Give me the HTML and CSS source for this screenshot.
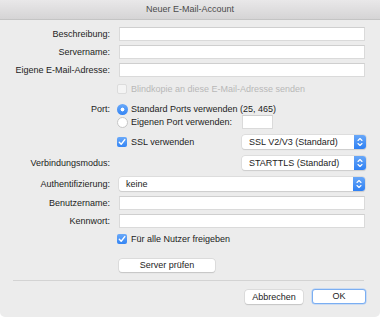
FILE: index.html
```html
<!DOCTYPE html>
<html lang="de">
<head>
<meta charset="utf-8">
<title>Neuer E-Mail-Account</title>
<link rel="stylesheet" href="styles.css">
</head>
<body>
<div class="window">
  <div class="titlebar">Neuer E-Mail-Account</div>
  <div class="form">
    <div class="row first">
      <div class="lbl">Beschreibung:</div>
      <div class="ctl"><div class="input"></div></div>
    </div>
    <div class="row g4">
      <div class="lbl">Servername:</div>
      <div class="ctl"><div class="input"></div></div>
    </div>
    <div class="row g4">
      <div class="lbl">Eigene E-Mail-Adresse:</div>
      <div class="ctl"><div class="input"></div></div>
    </div>
    <div class="row g6 small">
      <div class="lbl"></div>
      <div class="ctl opt disabled"><span class="box off"></span><span>Blindkopie an diese E-Mail-Adresse senden</span></div>
    </div>
    <div class="row g7 r13">
      <div class="lbl">Port:</div>
      <div class="ctl opt"><span class="radio on"></span><span>Standard Ports verwenden (25, 465)</span></div>
    </div>
    <div class="row g0">
      <div class="lbl"></div>
      <div class="ctl split">
        <div class="opt"><span class="radio"></span><span>Eigenen Port verwenden:</span></div>
        <div class="input port"></div>
      </div>
    </div>
    <div class="row g6">
      <div class="lbl"></div>
      <div class="ctl split">
        <div class="opt"><span class="box on"><svg viewBox="0 0 10 10"><path d="M2.3 5.2 L4.2 7.2 L7.8 2.6" fill="none" stroke="#fff" stroke-width="1.4" stroke-linecap="round" stroke-linejoin="round"/></svg></span><span>SSL verwenden</span></div>
        <div class="select"><span class="val">SSL V2/V3 (Standard)</span><span class="step"><svg viewBox="0 0 12 14"><path d="M4 5.5 L6 3.5 L8 5.5 M4 8.5 L6 10.5 L8 8.5" fill="none" stroke="#fff" stroke-width="1.1" stroke-linecap="round" stroke-linejoin="round"/></svg></span></div>
      </div>
    </div>
    <div class="row g7">
      <div class="lbl">Verbindungsmodus:</div>
      <div class="ctl split">
        <div></div>
        <div class="select"><span class="val">STARTTLS (Standard)</span><span class="step"><svg viewBox="0 0 12 14"><path d="M4 5.5 L6 3.5 L8 5.5 M4 8.5 L6 10.5 L8 8.5" fill="none" stroke="#fff" stroke-width="1.1" stroke-linecap="round" stroke-linejoin="round"/></svg></span></div>
      </div>
    </div>
    <div class="row g7">
      <div class="lbl">Authentifizierung:</div>
      <div class="ctl"><div class="select"><span class="val">keine</span><span class="step"><svg viewBox="0 0 12 14"><path d="M4 5.5 L6 3.5 L8 5.5 M4 8.5 L6 10.5 L8 8.5" fill="none" stroke="#fff" stroke-width="1.1" stroke-linecap="round" stroke-linejoin="round"/></svg></span></div></div>
    </div>
    <div class="row g5">
      <div class="lbl">Benutzername:</div>
      <div class="ctl"><div class="input"></div></div>
    </div>
    <div class="row g4">
      <div class="lbl">Kennwort:</div>
      <div class="ctl"><div class="input"></div></div>
    </div>
    <div class="row g5 small">
      <div class="lbl"></div>
      <div class="ctl opt"><span class="box on"><svg viewBox="0 0 10 10"><path d="M2.3 5.2 L4.2 7.2 L7.8 2.6" fill="none" stroke="#fff" stroke-width="1.4" stroke-linecap="round" stroke-linejoin="round"/></svg></span><span>Für alle Nutzer freigeben</span></div>
    </div>
    <div class="row g14 r13">
      <div class="lbl"></div>
      <div class="ctl"><div class="btn check">Server prüfen</div></div>
    </div>
  </div>
  <div class="sep"></div>
  <div class="footer">
    <div class="btn cancel">Abbrechen</div>
    <div class="btn ok">OK</div>
  </div>
</div>
</body>
</html>
```
FILE: styles.css
```css
* { box-sizing: border-box; }
html, body { margin: 0; padding: 0; background: #ffffff; }
body {
  font-family: "Liberation Sans", Arial, Helvetica, sans-serif;
  font-size: 9px;
  color: #232323;
  width: 380px;
  height: 317px;
  overflow: hidden;
}
.window {
  width: 380px;
  height: 317px;
  background: #ececec;
  border-radius: 0 0 5px 5px;
  overflow: hidden;
}
.titlebar {
  height: 20px;
  line-height: 19px;
  text-align: center;
  color: #4b4b4b;
  background: linear-gradient(#e9e8e9, #d5d4d5);
  border-bottom: 1px solid #c4c4c4;
}
.form { padding-top: 7px; }
.row {
  display: grid;
  grid-template-columns: 96px 246px;
  column-gap: 9px;
  margin-left: 14px;
  height: 14px;
  align-items: center;
}
.row.small { height: 12px; }
.row.r13 { height: 13px; }
.row.g0 { margin-top: 0; }
.row.g4 { margin-top: 4px; }
.row.g5 { margin-top: 5px; }
.row.g6 { margin-top: 6px; }
.row.g7 { margin-top: 7px; }
.row.g14 { margin-top: 14px; }
.lbl { text-align: right; white-space: nowrap; line-height: 14px; }
.ctl { height: 100%; display: flex; align-items: center; }
.ctl > .input, .ctl > .select { width: 100%; }
.input {
  height: 14px;
  background: #ffffff;
  border: 1px solid #dadada;
  border-top-color: #cfcfcf;
}
.input.port { width: 31px; }
.split {
  display: grid;
  grid-template-columns: 123px 124px;
  align-items: center;
}
.opt {
  display: flex;
  align-items: center;
  gap: 4px;
  white-space: nowrap;
  line-height: 12px;
}
.opt.disabled { color: #b8b8b8; }
.box {
  width: 10px;
  height: 10px;
  margin-left: -2px;
  border-radius: 2px;
  flex: none;
  display: flex;
}
.box svg { width: 10px; height: 10px; }
.box.on { background: linear-gradient(#6aa9f9, #3485f4); }
.box.off { background: #f4f4f4; border: 1px solid #dcdcdc; }
.radio {
  width: 11px;
  height: 11px;
  margin-left: -2px;
  margin-right: -1px;
  border-radius: 50%;
  flex: none;
  background: #ffffff;
  border: 1px solid #c6c6c6;
}
.radio.on {
  border: none;
  background: radial-gradient(circle, #ffffff 0 1.7px, transparent 2.2px), linear-gradient(#6aa9f9, #3485f4);
}
.select {
  height: 14px;
  background: #ffffff;
  border-radius: 3px;
  box-shadow: 0 0 0 0.5px #d2d2d2, 0 0.5px 1px rgba(0,0,0,0.15);
  display: flex;
  align-items: center;
  justify-content: space-between;
}
.val { padding-left: 7px; line-height: 14px; white-space: nowrap; }
.step {
  width: 12px;
  height: 14px;
  border-radius: 0 3px 3px 0;
  background: linear-gradient(#68a7f8, #2f80f3);
  display: flex;
}
.step svg { width: 12px; height: 14px; }
.btn {
  height: 13px;
  line-height: 13px;
  text-align: center;
  background: #ffffff;
  border-radius: 3px;
  box-shadow: 0 0 0 0.5px #cfcfcf, 0 0.5px 1px rgba(0,0,0,0.2);
  white-space: nowrap;
}
.btn.check { width: 96px; }
.sep {
  margin: 8px 16px 0 13px;
  height: 1px;
  background: #d3d3d3;
}
.footer {
  display: flex;
  justify-content: flex-end;
  gap: 9px;
  margin-top: 9px;
  padding-right: 14px;
}
.btn.cancel { width: 58px; height: 14px; line-height: 14px; }
.btn.ok {
  width: 54px;
  height: 15px;
  line-height: 13px;
  margin-top: -1px;
  border: 1px solid #7aaef2;
  box-shadow: 0 0 0 0.5px #a9c9f5;
}
```
